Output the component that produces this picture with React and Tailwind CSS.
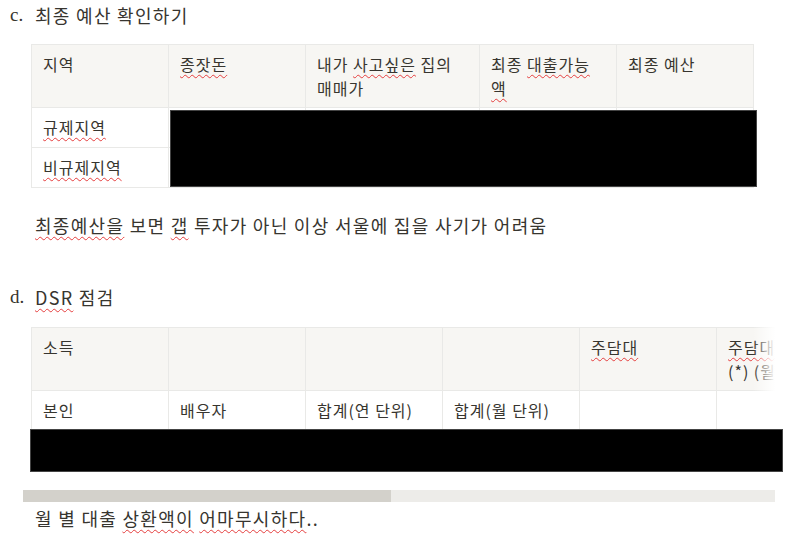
import React from "react";

const sans = { fontFamily: '"Noto Sans CJK KR", "Noto Sans", sans-serif' };

function Squiggle({ children }) {
  return (
    <span className="underline decoration-wavy decoration-[#e53e3e] decoration-1 underline-offset-[3px]">
      {children}
    </span>
  );
}

function Cell({ head, children, className = "" }) {
  return (
    <td
      className={
        "border border-[#e9e9e7] px-[11px] pt-[7px] align-top leading-6 tracking-[1px] " +
        (head ? "bg-[#f7f6f3] pb-[7px] " : "bg-white pb-[8px] ") +
        className
      }
    >
      {children}
    </td>
  );
}

export default function App() {
  return (
    <div
      className="relative h-[535px] w-[808px] overflow-hidden bg-white text-[#37352f]"
      style={sans}
    >
      {/* c. heading */}
      <div className="flex pt-[3px] text-[18px] leading-6 tracking-[1.3px]">
        <span
          className="w-[35px] pl-[10px] text-[19px] tracking-normal"
          style={{ fontFamily: '"Liberation Serif", serif' }}
        >
          c.
        </span>
        <span>최종 예산 확인하기</span>
      </div>

      {/* budget table */}
      <div className="relative ml-[31px] mt-[17px]">
        <table className="w-[722px] table-fixed border-collapse text-[16px]">
          <colgroup>
            <col className="w-[137px]" />
            <col className="w-[137px]" />
            <col className="w-[174px]" />
            <col className="w-[137px]" />
            <col className="w-[137px]" />
          </colgroup>
          <tbody>
            <tr>
              <Cell head>지역</Cell>
              <Cell head>
                <Squiggle>종잣돈</Squiggle>
              </Cell>
              <Cell head>
                내가 <Squiggle>사고싶은</Squiggle> 집의 매매가
              </Cell>
              <Cell head>
                최종 <Squiggle>대출가능</Squiggle> <Squiggle>액</Squiggle>
              </Cell>
              <Cell head>최종 예산</Cell>
            </tr>
            <tr>
              <Cell>
                <Squiggle>규제지역</Squiggle>
              </Cell>
              <Cell />
              <Cell />
              <Cell />
              <Cell />
            </tr>
            <tr>
              <Cell>
                <Squiggle>비규제지역</Squiggle>
              </Cell>
              <Cell />
              <Cell />
              <Cell />
              <Cell />
            </tr>
          </tbody>
        </table>
        <div className="absolute left-[139px] top-[66px] h-[77px] w-[587px] border border-[#444] bg-black" />
      </div>

      {/* note */}
      <p className="ml-[35px] mt-[25px] text-[18px] leading-6 tracking-[1.3px]">
        <Squiggle>최종예산을</Squiggle> 보면 <Squiggle>갭</Squiggle> 투자가 아닌
        이상 서울에 집을 사기가 어려움
      </p>

      {/* d. heading */}
      <div className="mt-[48px] flex text-[18px] leading-6 tracking-[1.3px]">
        <span
          className="w-[35px] pl-[10px] text-[19px] tracking-normal"
          style={{ fontFamily: '"Liberation Serif", serif' }}
        >
          d.
        </span>
        <span>
          <Squiggle>DSR</Squiggle> 점검
        </span>
      </div>

      {/* DSR table */}
      <div className="relative mt-[18px]">
        <div className="ml-[23px] w-[752px] overflow-hidden">
          <div className="relative pl-[8px]">
            <table className="w-[959px] table-fixed border-collapse text-[16px]">
              <tbody>
                <tr>
                  <Cell head className="w-[137px]">소득</Cell>
                  <Cell head className="w-[137px]" />
                  <Cell head className="w-[137px]" />
                  <Cell head className="w-[137px]" />
                  <Cell head className="w-[137px]">
                    <Squiggle>주담대</Squiggle>
                  </Cell>
                  <Cell head className="w-[137px]">
                    <Squiggle>주담대</Squiggle> 원리금 (*) (월 단위)
                  </Cell>
                  <Cell head className="w-[137px]" />
                </tr>
                <tr>
                  <Cell>본인</Cell>
                  <Cell>배우자</Cell>
                  <Cell>합계(연 단위)</Cell>
                  <Cell>합계(월 단위)</Cell>
                  <Cell />
                  <Cell />
                  <Cell />
                </tr>
                <tr>
                  <Cell className="h-[41px]" />
                  <Cell />
                  <Cell />
                  <Cell />
                  <Cell />
                  <Cell />
                  <Cell />
                </tr>
              </tbody>
            </table>
            <div className="absolute right-0 top-0 h-full w-[22px] bg-linear-to-r from-white/0 to-white" />
          </div>
          {/* scrollbar */}
          <div className="mt-[18px] h-[12px] w-full bg-[#edece9]">
            <div className="h-full w-[368px] bg-[#d3d1cb]" />
          </div>
        </div>
        <div className="absolute left-[30px] top-[102px] h-[43px] w-[753px] border border-[#444] bg-black" />
      </div>

      {/* closing note */}
      <p className="ml-[35px] mt-[4px] text-[18px] leading-6 tracking-[1.3px]">
        월 별 대출 <Squiggle>상환액이</Squiggle> <Squiggle>어마무시하다</Squiggle>..
      </p>
    </div>
  );
}
